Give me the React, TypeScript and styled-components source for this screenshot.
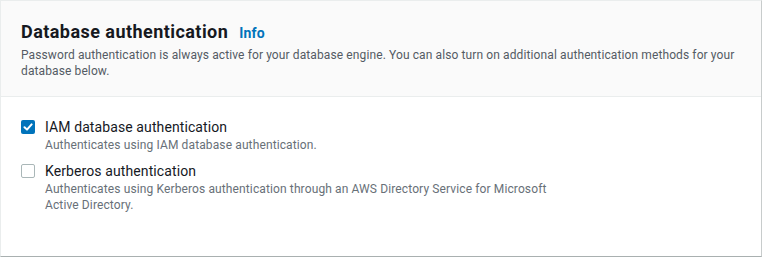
import React from "react";
import styled, { createGlobalStyle } from "styled-components";

const GlobalStyle = createGlobalStyle`
  body {
    margin: 0;
    background: #ffffff;
    font-family: Roboto, "Liberation Sans", sans-serif;
  }
`;

const Card = styled.section`
  box-sizing: border-box;
  width: 762px;
  height: 257px;
  border: 1px solid #eaeded;
  border-right-color: #c8cccc;
  border-bottom-color: #a9b0b0;
  background: #ffffff;
  display: flex;
  flex-direction: column;
`;

const Header = styled.header`
  background: #fafafa;
  border-bottom: 1px solid #eaeded;
  padding: 19px 20px 19px 20px;
  height: 96px;
  box-sizing: border-box;
`;

const TitleRow = styled.div`
  display: flex;
  align-items: baseline;
  gap: 11px;
`;

const Title = styled.h2`
  margin: 0;
  font-size: 18px;
  line-height: 24px;
  font-weight: 700;
  letter-spacing: 0.45px;
  color: #16191f;
`;

const InfoLink = styled.a`
  font-size: 14px;
  font-weight: 700;
  letter-spacing: 0.2px;
  color: #0073bb;
  text-decoration: none;
`;

const Description = styled.p`
  margin: 3px 0 0;
  font-size: 12px;
  line-height: 16px;
  letter-spacing: 0.11px;
  color: #545b64;
`;

const Body = styled.div`
  padding: 20px 20px;
  display: flex;
  flex-direction: column;
  gap: 8px;
`;

const Option = styled.label`
  display: grid;
  grid-template-columns: 14px 1fr;
  column-gap: 10px;
  max-width: 540px;
  cursor: pointer;
`;

const Box = styled.span<{ $checked: boolean }>`
  box-sizing: border-box;
  width: 14px;
  height: 14px;
  margin-top: 3px;
  border-radius: 2px;
  border: ${(p) => (p.$checked ? "none" : "1px solid #aab7b8")};
  background: ${(p) => (p.$checked ? "#0073bb" : "#ffffff")};
  display: flex;
  align-items: center;
  justify-content: center;
`;

const Label = styled.span`
  font-size: 14px;
  line-height: 20px;
  letter-spacing: 0.1px;
  color: #16191f;
`;

const Hint = styled.span`
  grid-column: 2;
  font-size: 12px;
  line-height: 16px;
  letter-spacing: 0.12px;
  color: #687078;
`;

const options = [
  {
    label: "IAM database authentication",
    hint: "Authenticates using IAM database authentication.",
    checked: true,
  },
  {
    label: "Kerberos authentication",
    hint: "Authenticates using Kerberos authentication through an AWS Directory Service for Microsoft Active Directory.",
    checked: false,
  },
];

const App = () => {
  return (
    <>
      <GlobalStyle />
      <Card>
        <Header>
          <TitleRow>
            <Title>Database authentication</Title>
            <InfoLink href="#">Info</InfoLink>
          </TitleRow>
          <Description>
            Password authentication is always active for your database engine. You can also turn on
            additional authentication methods for your database below.
          </Description>
        </Header>
        <Body>
          {options.map((o) => (
            <Option key={o.label}>
              <Box $checked={o.checked}>
                {o.checked && (
                  <svg width="10" height="10" viewBox="0 0 10 10">
                    <path d="M1.5 5.2 L4 7.6 L8.6 2.4" fill="none" stroke="#fff" strokeWidth="2" strokeLinecap="round" strokeLinejoin="round" />
                  </svg>
                )}
              </Box>
              <Label>{o.label}</Label>
              <Hint>{o.hint}</Hint>
            </Option>
          ))}
        </Body>
      </Card>
    </>
  );
};

export default App;
